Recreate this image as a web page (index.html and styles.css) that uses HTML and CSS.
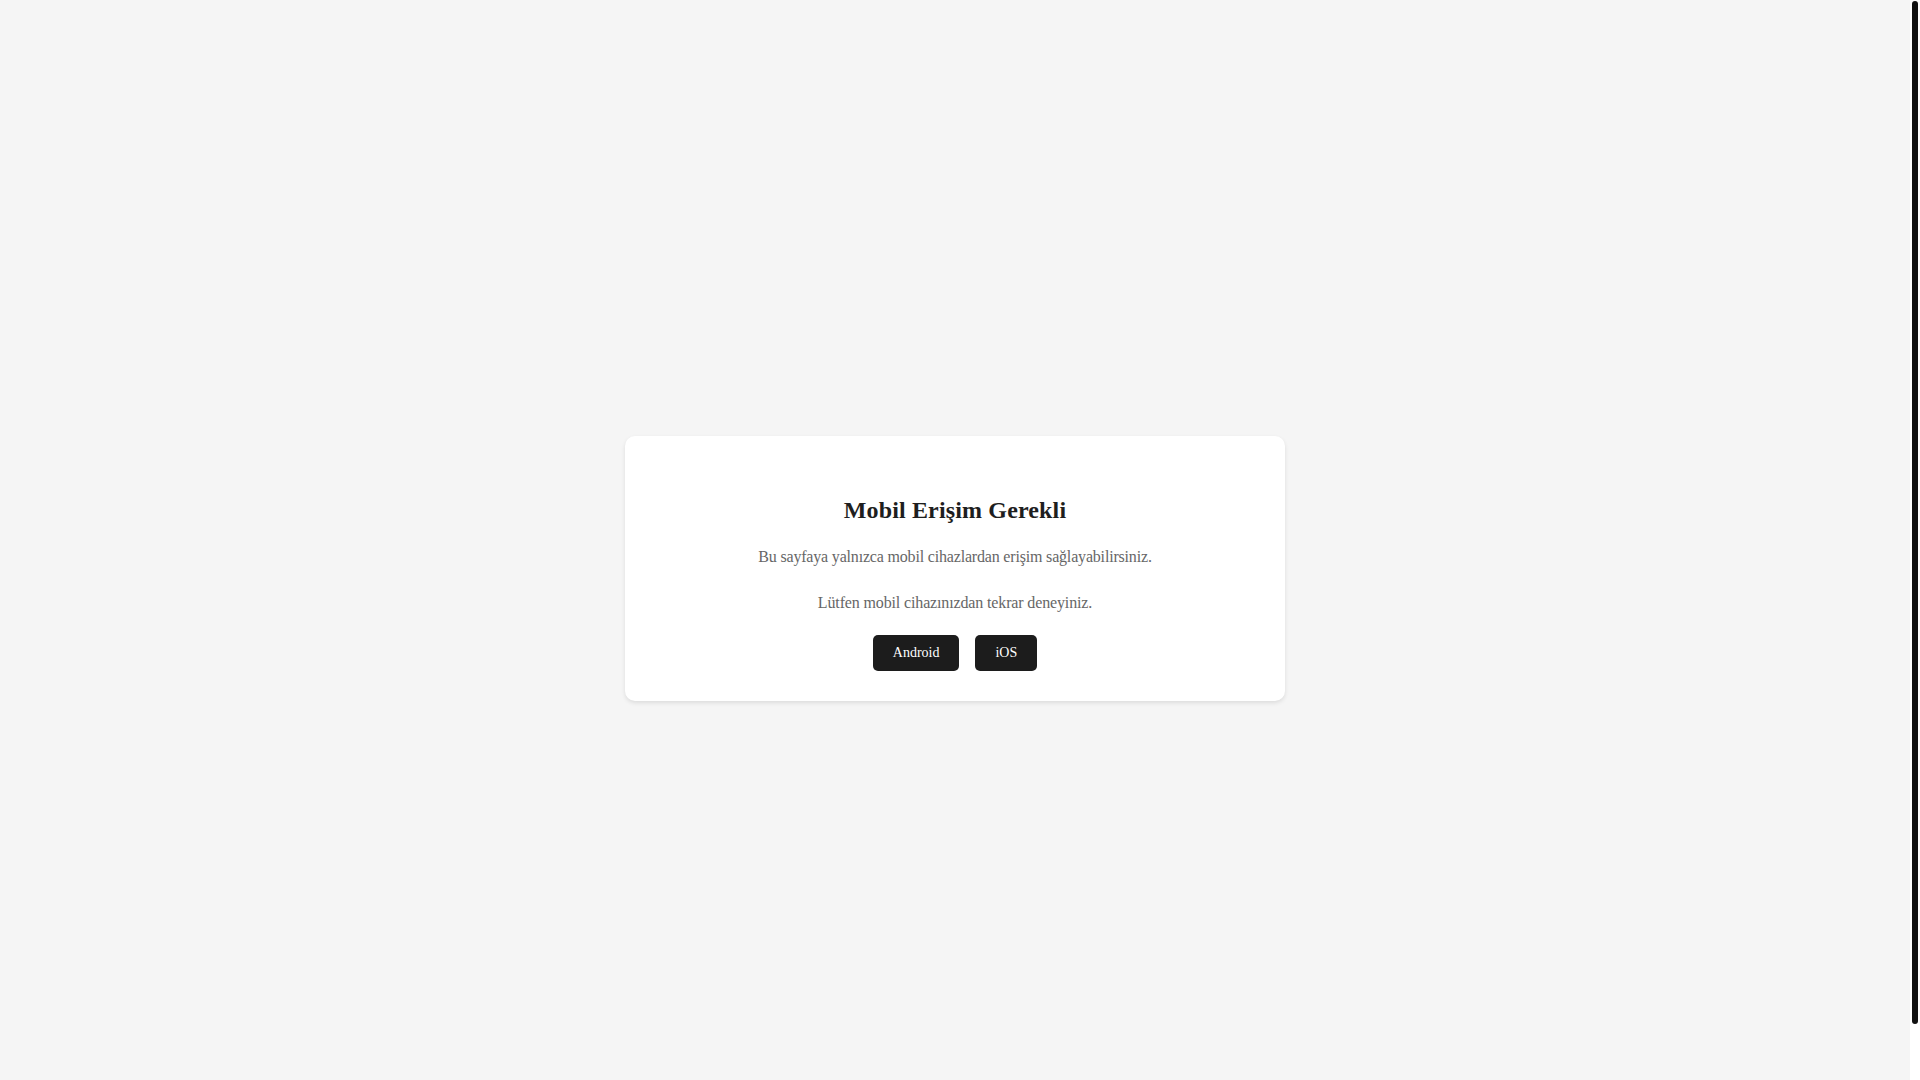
FILE: index.html
```html
<!DOCTYPE html>
<html lang="tr">
<head>
<meta charset="utf-8">
<title>Mobil Erişim Gerekli</title>
<link rel="stylesheet" href="styles.css">
</head>
<body>
<main class="page">
  <section class="card">
    <h2 class="card-title">Mobil Erişim Gerekli</h2>
    <p class="card-text card-text-first">Bu sayfaya yalnızca mobil cihazlardan erişim sağlayabilirsiniz.</p>
    <p class="card-text card-text-second">Lütfen mobil cihazınızdan tekrar deneyiniz.</p>
    <div class="actions">
      <a class="btn" href="#">Android</a>
      <a class="btn" href="#">iOS</a>
    </div>
  </section>
</main>
<div class="scrollbar" aria-hidden="true"><div class="scrollbar-thumb"></div></div>
</body>
</html>
```

FILE: styles.css
```css
html {
  background: #f5f5f5;
}

body {
  margin: 8px 18px 8px 8px;
  padding: 20px;
  background: #f5f5f5;
  font-family: "Liberation Serif", "Times New Roman", serif;
}

.page {
  min-height: 100vh;
  display: flex;
  align-items: center;
  justify-content: center;
}

.card {
  width: 580px;
  padding: 40px 40px 30px;
  background: #ffffff;
  border-radius: 10px;
  box-shadow: 0 2px 4px rgba(0, 0, 0, 0.1);
  text-align: center;
  display: flex;
  flex-direction: column;
  align-items: center;
}

.card-title {
  margin: 21px 0 0;
  font-size: 24px;
  font-weight: bold;
  line-height: normal;
  letter-spacing: 0.15px;
  color: #1e1e1e;
}

.card-text {
  margin: 0;
  font-size: 16px;
  line-height: normal;
  color: #666666;
}

.card-text-first {
  margin-top: 24px;
  letter-spacing: -0.18px;
}

.card-text-second {
  margin-top: 28.5px;
  letter-spacing: -0.14px;
}

.actions {
  margin-top: 22.5px;
  display: flex;
  gap: 16px;
  justify-content: center;
}

.btn {
  display: inline-block;
  padding: 10px 20px;
  background: #1c1c1c;
  color: #ffffff;
  font-size: 14px;
  line-height: normal;
  text-decoration: none;
  border-radius: 5px;
}

.scrollbar {
  position: fixed;
  top: 0;
  right: 0;
  width: 10px;
  height: 100vh;
  background: #ffffff;
}

.scrollbar-thumb {
  margin: 1px 2px 0;
  height: 1023px;
  background: #111111;
  border-radius: 3px;
}
```
